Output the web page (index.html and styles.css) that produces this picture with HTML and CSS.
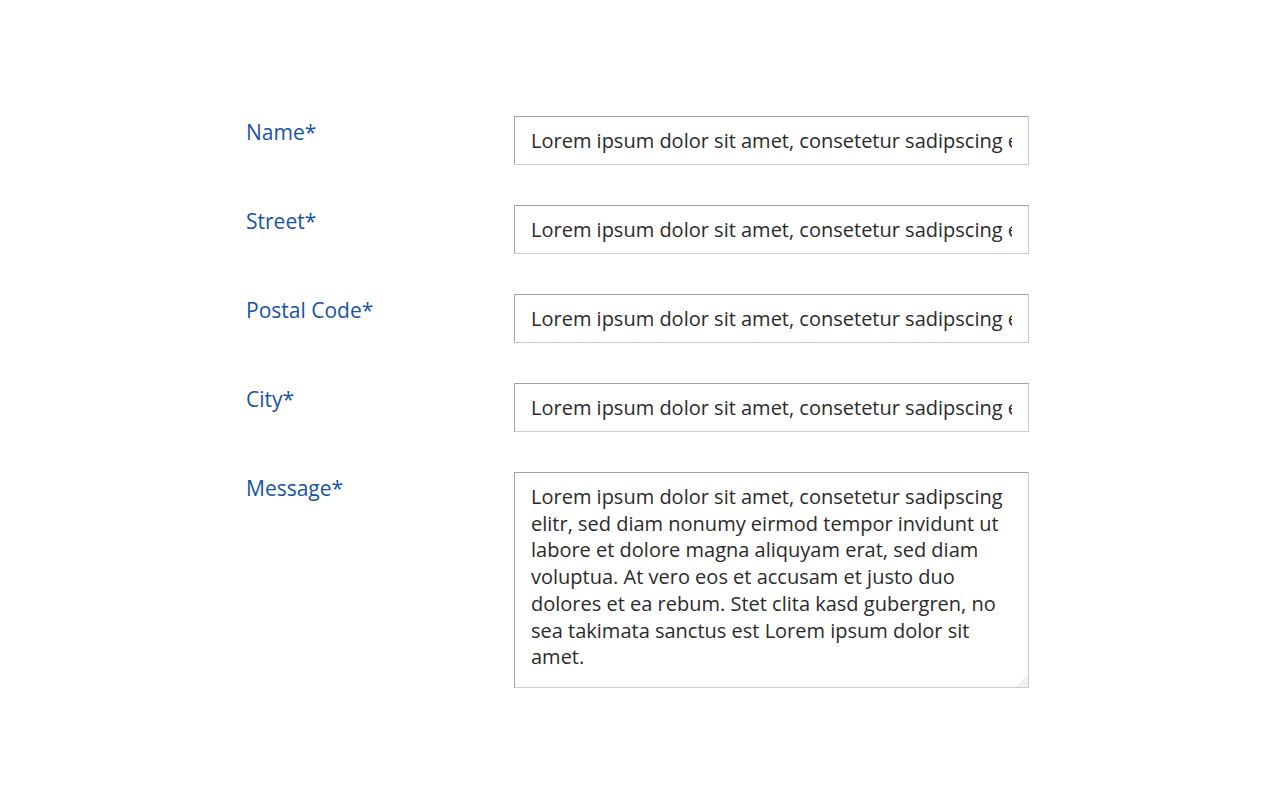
FILE: index.html
```html
<!DOCTYPE html>
<html lang="en">
<head>
<meta charset="utf-8">
<title>Form</title>
<link rel="stylesheet" href="styles.css">
</head>
<body>
<form class="form">
  <div class="row">
    <label class="label" for="name">Name*</label>
    <input class="field" id="name" type="text" value="Lorem ipsum dolor sit amet, consetetur sadipscing elitr, sed diam nonumy eirmod tempor">
  </div>
  <div class="row">
    <label class="label" for="street">Street*</label>
    <input class="field" id="street" type="text" value="Lorem ipsum dolor sit amet, consetetur sadipscing elitr, sed diam nonumy eirmod tempor">
  </div>
  <div class="row">
    <label class="label" for="postal">Postal Code*</label>
    <input class="field" id="postal" type="text" value="Lorem ipsum dolor sit amet, consetetur sadipscing elitr, sed diam nonumy eirmod tempor">
  </div>
  <div class="row">
    <label class="label" for="city">City*</label>
    <input class="field" id="city" type="text" value="Lorem ipsum dolor sit amet, consetetur sadipscing elitr, sed diam nonumy eirmod tempor">
  </div>
  <div class="row">
    <label class="label" for="message">Message*</label>
    <textarea class="field area" id="message">Lorem ipsum dolor sit amet, consetetur sadipscing elitr, sed diam nonumy eirmod tempor invidunt ut labore et dolore magna aliquyam erat, sed diam voluptua. At vero eos et accusam et justo duo dolores et ea rebum. Stet clita kasd gubergren, no sea takimata sanctus est Lorem ipsum dolor sit amet.</textarea>
  </div>
</form>
</body>
</html>
```
FILE: styles.css
```css
html, body {
  margin: 0;
  padding: 0;
  background: #ffffff;
}
body {
  font-family: "Open Sans", "Noto Sans", sans-serif;
}
.form {
  width: 783px;
  margin: 116px 0 0 246px;
  display: flex;
  flex-direction: column;
  gap: 40px;
}
.row {
  display: flex;
  align-items: flex-start;
}
.label {
  width: 268px;
  flex: none;
  font-size: 21px;
  line-height: 28px;
  color: #1753a6;
  padding-top: 2px;
}
.field {
  box-sizing: border-box;
  width: 515px;
  height: 49px;
  margin: 0;
  padding: 0 16px;
  font-family: "Open Sans", "Noto Sans", sans-serif;
  font-size: 20px;
  color: #2b2b2b;
  background: #ffffff;
  border: 1px solid;
  border-color: #a3a3a3 #cccccc #cccccc #a3a3a3;
  border-radius: 0;
  outline: none;
}
.area {
  height: 216px;
  padding: 11px 16px 10px;
  line-height: 26.7px;
  resize: none;
  overflow: hidden;
  background: #ffffff linear-gradient(135deg, transparent 50%, #f0f0f0 50%) no-repeat right bottom / 12px 12px;
}
```
